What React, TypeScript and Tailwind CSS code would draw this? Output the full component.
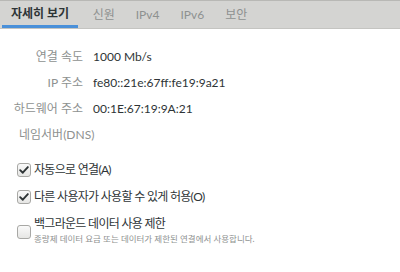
const tabs = ["자세히 보기", "신원", "IPv4", "IPv6", "보안"];

const rows = [
  { label: "연결 속도", value: "1000 Mb/s" },
  { label: "IP 주소", value: "fe80::21e:67ff:fe19:9a21" },
  { label: "하드웨어 주소", value: "00:1E:67:19:9A:21" },
];

const font = {
  fontFamily: 'Lato, "Noto Sans CJK KR", sans-serif',
};

function Check({ on }: { on: boolean }) {
  return (
    <span className="flex h-[14px] w-[14px] shrink-0 items-center justify-center rounded-[3px] border border-[#a8a8a5] bg-gradient-to-b from-[#fafafa] to-[#e6e6e4]">
      {on && (
        <svg viewBox="0 0 14 14" className="h-[12px] w-[12px]">
          <path d="M2.5 7.2 L5.6 10.2 L11.5 3.6" fill="none" stroke="#2e3436" strokeWidth="2.2" strokeLinecap="round" strokeLinejoin="round" />
        </svg>
      )}
    </span>
  );
}

export default function App() {
  return (
    <div className="h-[272px] w-[400px] overflow-hidden bg-white text-[#2e3436]" style={font}>
      {/* Tabs */}
      <div className="flex h-[29px] border-t border-b border-t-[#b8b8b5] border-b-[#c4c4c1] bg-[#d4d4d2] pl-[2px]">
        {tabs.map((t, i) => (
          <div
            key={t}
            className={
              i === 0
                ? "mr-[4px] flex h-full items-center border-b-[3px] border-[#4a90d9] px-[9px] pt-[2px] text-[12px] font-bold text-[#2e3436]"
                : "flex h-full items-center px-[10.5px] text-[12px] text-[#8e9190]"
            }
          >
            {t}
          </div>
        ))}
      </div>

      {/* Details */}
      <div className="flex flex-col gap-[8px] pt-[19px]">
        {rows.map((r) => (
          <div key={r.label} className="flex h-[18px] items-center text-[12px]">
            <span className="w-[83px] text-right text-[#8e9190]">{r.label}</span>
            <span className="ml-[10px]">{r.value}</span>
          </div>
        ))}
        <div className="flex h-[18px] items-center pl-[19px] text-[12px] text-[#8e9190]">네임서버(DNS)</div>
      </div>

      {/* Options */}
      <div className="flex flex-col pl-[17px] pt-[17px] text-[12px] tracking-[-0.7px]">
        <label className="flex h-[18px] items-center gap-[3px]">
          <Check on />
          <span>자동으로 연결(A)</span>
        </label>
        <label className="mt-[9px] flex h-[18px] items-center gap-[3px]">
          <Check on />
          <span>다른 사용자가 사용할 수 있게 허용(O)</span>
        </label>
        <label className="mt-[9px] flex items-start gap-[3px]">
          <span className="pt-[10px]">
            <Check on={false} />
          </span>
          <span className="flex flex-col">
            <span className="leading-[18px]">백그라운드 데이터 사용 제한</span>
            <span className="text-[8.5px] leading-[12px] tracking-normal text-[#8e9190]">종량제 데이터 요금 또는 데이터가 제한된 연결에서 사용합니다.</span>
          </span>
        </label>
      </div>
    </div>
  );
}
